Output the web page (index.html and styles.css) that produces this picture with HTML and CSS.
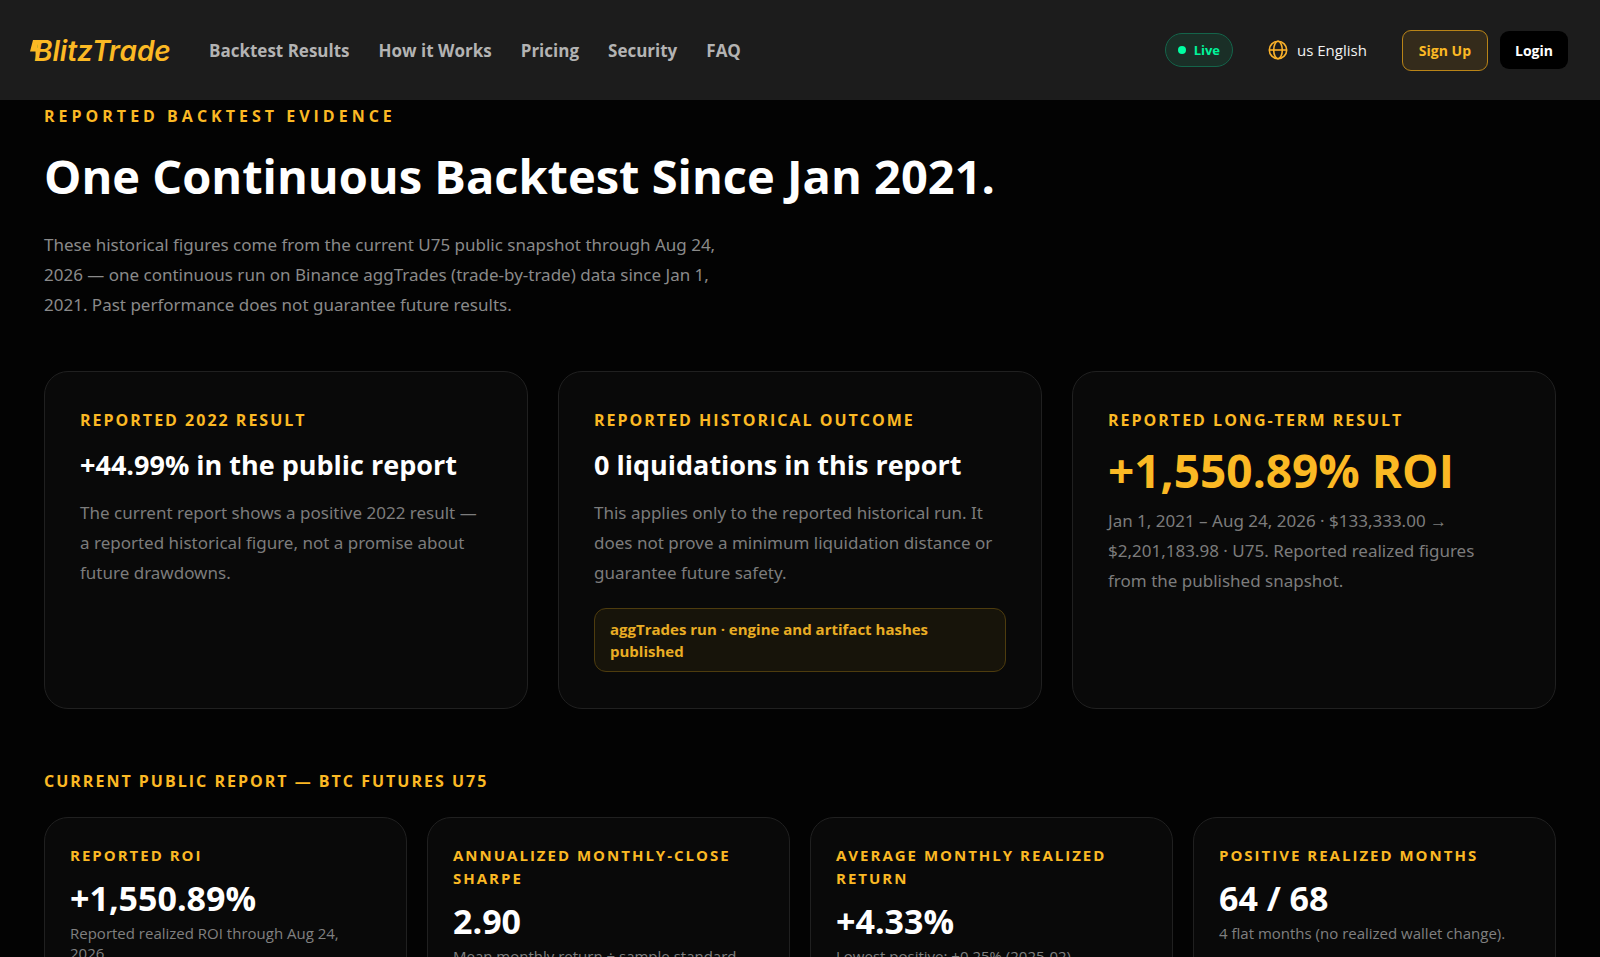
FILE: index.html
```html
<!DOCTYPE html>
<html lang="en">
<head>
<meta charset="utf-8">
<meta name="viewport" content="width=device-width, initial-scale=1">
<title>BlitzTrade</title>
<link rel="stylesheet" href="styles.css">
</head>
<body>
<header class="site-header">
  <a class="brand" href="#" aria-label="BlitzTrade home">
    <svg class="brand-logo" width="142" height="36" viewBox="0 0 142 36">
      <path d="M3 8H13L12.300 11.500H8.200L7 16H9.600L6 29L5.500 19.500H0Z" fill="#fbb924"/>
      <text class="brand-text" x="4" y="29">BlitzTrade</text>
    </svg>
  </a>
  <nav class="site-nav" aria-label="Main">
    <a href="#results">Backtest Results</a>
    <a href="#how">How it Works</a>
    <a href="#pricing">Pricing</a>
    <a href="#security">Security</a>
    <a href="#faq">FAQ</a>
  </nav>
  <div class="header-actions">
    <span class="live"><span class="live-dot"></span>Live</span>
    <button class="language" type="button">
      <svg width="20" height="20" viewBox="0 0 20 20" fill="none" stroke="#fbb22a" stroke-width="1.600">
        <circle cx="10" cy="10" r="8.700"/>
        <ellipse cx="10" cy="10" rx="4.300" ry="8.700"/>
        <path d="M1.300 10H18.700"/>
      </svg>
      us English
    </button>
    <div class="auth">
      <a class="btn btn-signup" href="#signup">Sign Up</a>
      <a class="btn btn-login" href="#login">Login</a>
    </div>
  </div>
</header>
<main class="page" id="results">
  <p class="eyebrow">REPORTED BACKTEST EVIDENCE</p>
  <h1 class="headline">One Continuous Backtest Since Jan 2021.</h1>
  <p class="lead">These historical figures come from the current U75 public snapshot through Aug 24, 2026 — one continuous run on Binance aggTrades (trade-by-trade) data since Jan 1, 2021. Past performance does not guarantee future results.</p>
  <section class="results">
    <article class="card">
      <p class="label">REPORTED 2022 RESULT</p>
      <h2 class="card-title">+44.99% in the public report</h2>
      <p class="card-text">The current report shows a positive 2022 result — a reported historical figure, not a promise about future drawdowns.</p>
    </article>
    <article class="card">
      <p class="label">REPORTED HISTORICAL OUTCOME</p>
      <h2 class="card-title">0 liquidations in this report</h2>
      <p class="card-text">This applies only to the reported historical run. It does not prove a minimum liquidation distance or guarantee future safety.</p>
      <p class="note">aggTrades run · engine and artifact hashes published</p>
    </article>
    <article class="card">
      <p class="label">REPORTED LONG-TERM RESULT</p>
      <h2 class="card-figure">+1,550.89% ROI</h2>
      <p class="card-text">Jan 1, 2021 – Aug 24, 2026 · $133,333.00 → $2,201,183.98 · U75. Reported realized figures from the published snapshot.</p>
    </article>
  </section>
  <h2 class="label report-label">CURRENT PUBLIC REPORT — BTC FUTURES U75</h2>
  <section class="stats">
    <article class="stat">
      <h3 class="stat-label">REPORTED ROI</h3>
      <p class="stat-value">+1,550.89%</p>
      <p class="stat-text">Reported realized ROI through Aug 24, 2026.</p>
    </article>
    <article class="stat">
      <h3 class="stat-label">ANNUALIZED MONTHLY-CLOSE SHARPE</h3>
      <p class="stat-value">2.90</p>
      <p class="stat-text">Mean monthly return ÷ sample standard</p>
    </article>
    <article class="stat">
      <h3 class="stat-label">AVERAGE MONTHLY REALIZED RETURN</h3>
      <p class="stat-value">+4.33%</p>
      <p class="stat-text">Lowest positive: +0.25% (2025-02)</p>
    </article>
    <article class="stat">
      <h3 class="stat-label">POSITIVE REALIZED MONTHS</h3>
      <p class="stat-value">64 / 68</p>
      <p class="stat-text">4 flat months (no realized wallet change).</p>
    </article>
  </section>
</main>
</body>
</html>
```
FILE: styles.css
```css
* { box-sizing: border-box; }
html { background: #030303; overflow: hidden; height: 100%; }
body {
  margin: 0;
  height: 100%;
  overflow: hidden;
  background: #030303;
  color: #fff;
  font-family: "Open Sans", "Noto Sans", sans-serif;
  font-size: 17px;
}
h1, h2, h3, p { margin: 0; }
a { color: inherit; text-decoration: none; }

.site-header {
  display: flex;
  align-items: center;
  height: 100px;
  padding: 0 32px 0 30px;
  background: #1c1c1c;
}
.brand { display: flex; }
.brand-text {
  fill: #fbb924;
  font-family: Inter, sans-serif;
  font-size: 28px;
  font-style: italic;
  font-weight: 600;
}
.site-nav {
  display: flex;
  gap: 29px;
  margin-left: 37px;
  color: #b3b3b3;
  font-size: 17px;
  font-weight: 700;
}
.header-actions {
  display: flex;
  align-items: center;
  margin-left: auto;
  font-size: 15px;
}
.live {
  display: flex;
  align-items: center;
  gap: 8px;
  height: 34px;
  padding: 0 12px;
  border: 1px solid #14644a;
  border-radius: 17px;
  background: #1a2f27;
  color: #00f59b;
  font-size: 13px;
  font-weight: 700;
}
.live-dot { width: 8px; height: 8px; border-radius: 50%; background: #00ffa3; }
.language {
  display: flex;
  align-items: center;
  gap: 9px;
  margin: 0 35px;
  padding: 0;
  border: 0;
  background: none;
  color: #f2f2f2;
  font: inherit;
}
.auth { display: flex; align-items: center; gap: 12px; }
.btn {
  display: flex;
  align-items: center;
  justify-content: center;
  border-radius: 9px;
  font-weight: 700;
  font-size: 14px;
}
.btn-signup { height: 41px; padding: 0 16px; border: 1px solid #b98417; background: #342b1b; color: #fbb924; }
.btn-login { height: 38px; padding: 0 15px; background: #000; color: #fff; }

.page { padding: 4px 44px 0; }
.eyebrow {
  color: #fbb924;
  font-size: 16px;
  font-weight: 700;
  line-height: 24px;
  letter-spacing: 4px;
}
.headline { margin-top: 15px; font-size: 47px; font-weight: 700; line-height: 66px; }
.lead {
  max-width: 700px;
  margin-top: 21px;
  color: #8a8a8a;
  font-family: "Noto Sans", "Open Sans", sans-serif;
  font-size: 17px;
  line-height: 30px;
}

.results {
  display: grid;
  grid-template-columns: repeat(3, 1fr);
  gap: 30px;
  margin-top: 51px;
}
.card {
  padding: 36px 35px;
  border: 1px solid #202020;
  border-radius: 24px;
  background: #090909;
}
.label { color: #fbb924; font-size: 16px; font-weight: 700; line-height: 24px; letter-spacing: 2px; }
.card-title { margin-top: 14px; font-size: 27px; font-weight: 700; line-height: 38px; }
.card-figure { margin-top: 10px; color: #fbb924; font-size: 46px; font-weight: 700; line-height: 56px; }
.card-text {
  max-width: 403px;
  margin-top: 14px;
  color: #7c7c7c;
  font-family: "Noto Sans", "Open Sans", sans-serif;
  font-size: 17px;
  line-height: 30px;
}
.card-figure + .card-text { margin-top: 8px; }
.note {
  margin-top: 20px;
  padding: 9px 15px;
  border: 1px solid #4e3c0e;
  border-radius: 12px;
  background: #17140a;
  color: #e9ad24;
  font-size: 15px;
  font-weight: 700;
  line-height: 22px;
}

.report-label { margin-top: 60px; }
.stats {
  display: grid;
  grid-template-columns: repeat(4, 1fr);
  gap: 20px;
  margin-top: 24px;
}
.stat {
  padding: 26px 25px;
  border: 1px solid #202020;
  border-radius: 24px;
  background: #090909;
}
.stat-label { color: #fbb924; font-size: 15px; font-weight: 700; line-height: 23px; letter-spacing: 2px; }
.stat-value { margin-top: 10px; font-size: 34px; font-weight: 700; line-height: 42px; }
.stat-text { max-width: 300px; margin-top: 4px; color: #808080; font-size: 15px; line-height: 20px; }
```
